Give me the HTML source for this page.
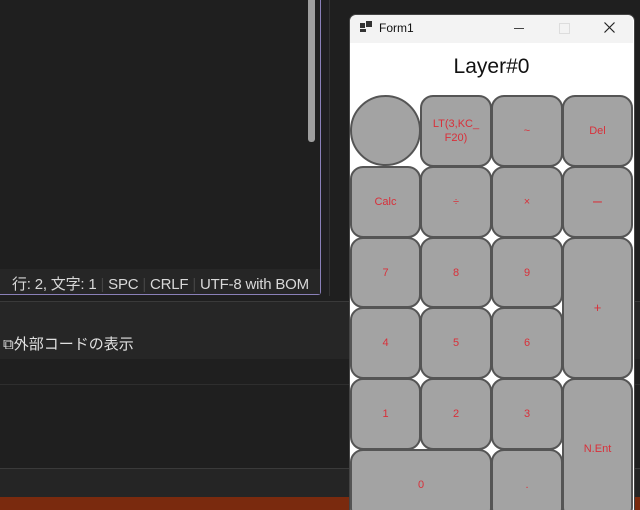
<!DOCTYPE html>
<html style="overflow:hidden;width:640px;height:510px"><head><meta charset="utf-8"><style>
body{margin:0;width:640px;height:510px;background:#1f1f1f;position:relative;overflow:hidden;font-family:"Liberation Sans","Noto Sans CJK JP",sans-serif}
.a{position:absolute}
.k{position:absolute;box-sizing:border-box;background:#a3a3a3;border:2px solid #555;border-radius:13px;color:#d8303a;font-size:11px;display:flex;align-items:center;justify-content:center;text-align:center;line-height:14px}
</style></head><body>
<div class="a" style="left:308px;top:0;width:7px;height:142px;background:#9e9e9e;border-radius:0 0 3px 3px"></div>
<div class="a" style="left:0;top:0;width:320px;height:294px;border-right:1px solid #8a80b8;border-bottom:1px solid #8a80b8;border-radius:0 0 3px 0"></div>
<div class="a" style="left:0;top:269px;width:320px;height:25px;background:#262626"></div>
<div class="a" style="left:12px;top:273px;color:#d8d8d8;font-size:15px;white-space:nowrap;letter-spacing:-0.2px">行: 2, 文字: 1 <span style="color:#444">|</span> SPC <span style="color:#444">|</span> CRLF <span style="color:#444">|</span> UTF-8 with BOM</div>
<div class="a" style="left:329px;top:0;width:1px;height:296px;background:#333"></div>
<div class="a" style="left:0;top:301px;width:640px;height:1px;background:#3a3a3a"></div>
<div class="a" style="left:0;top:302px;width:640px;height:57px;background:#262626"></div>
<div class="a" style="left:3px;top:333px;color:#e0e0e0;font-size:15px;white-space:nowrap">⧉外部コードの表示</div>
<div class="a" style="left:0;top:384px;width:640px;height:1px;background:#2e2e2e"></div>
<div class="a" style="left:0;top:468px;width:640px;height:1px;background:#3a3a3a"></div>
<div class="a" style="left:0;top:469px;width:640px;height:28px;background:#252525"></div>
<div class="a" style="left:0;top:497px;width:640px;height:13px;background:#7a2a0e"></div>
<div class="a" style="left:349px;top:14px;width:284px;height:496px;background:#fff;border-radius:7px 7px 0 0;border:1px solid #444;border-bottom:none"></div>
<div class="a" style="left:350px;top:15px;width:283px;height:28px;background:#f3f3f3;border-radius:7px 7px 0 0"></div>
<div class="a" style="left:360px;top:23px;width:5px;height:5px;background:#333"></div>
<div class="a" style="left:366px;top:21px;width:6px;height:6px;background:#333"></div>
<div class="a" style="left:360px;top:29px;width:6px;height:3px;background:#333"></div>
<div class="a" style="left:379px;top:21px;font-size:12px;color:#111">Form1</div>
<div class="a" style="left:514px;top:28px;width:10px;height:1px;background:#444"></div>
<div class="a" style="left:559px;top:23px;width:9px;height:9px;border:1px solid #ddd"></div>
<svg class="a" style="left:604px;top:22px" width="11" height="11"><path d="M0.5 0.5L10.5 10.5M10.5 0.5L0.5 10.5" stroke="#222" stroke-width="1.2"/></svg>
<div class="a" style="left:350px;top:55px;width:283px;text-align:center;font-size:21px;color:#111">Layer#0</div>
<div style="position:absolute;left:0;top:0;width:640px;height:510px;overflow:hidden">
<div class="k" style="left:350px;top:95px;width:71px;height:71px;border-radius:50%"></div>
<div class="k" style="left:420px;top:95px;width:72px;height:72px">LT(3,KC_<br>F20)</div>
<div class="k" style="left:491px;top:95px;width:72px;height:72px">~</div>
<div class="k" style="left:562px;top:95px;width:71px;height:72px">Del</div>
<div class="k" style="left:350px;top:166px;width:71px;height:72px">Calc</div>
<div class="k" style="left:420px;top:166px;width:72px;height:72px">÷</div>
<div class="k" style="left:491px;top:166px;width:72px;height:72px">×</div>
<div class="k" style="left:562px;top:166px;width:71px;height:72px;font-size:16px">–</div>
<div class="k" style="left:350px;top:237px;width:71px;height:71px">7</div>
<div class="k" style="left:420px;top:237px;width:72px;height:71px">8</div>
<div class="k" style="left:491px;top:237px;width:72px;height:71px">9</div>
<div class="k" style="left:562px;top:237px;width:71px;height:142px;font-size:13px">+</div>
<div class="k" style="left:350px;top:307px;width:71px;height:72px">4</div>
<div class="k" style="left:420px;top:307px;width:72px;height:72px">5</div>
<div class="k" style="left:491px;top:307px;width:72px;height:72px">6</div>
<div class="k" style="left:350px;top:378px;width:71px;height:72px">1</div>
<div class="k" style="left:420px;top:378px;width:72px;height:72px">2</div>
<div class="k" style="left:491px;top:378px;width:72px;height:72px">3</div>
<div class="k" style="left:562px;top:378px;width:71px;height:142px">N.Ent</div>
<div class="k" style="left:350px;top:449px;width:142px;height:72px">0</div>
<div class="k" style="left:491px;top:449px;width:72px;height:72px">.</div>
</div>
</body></html>
